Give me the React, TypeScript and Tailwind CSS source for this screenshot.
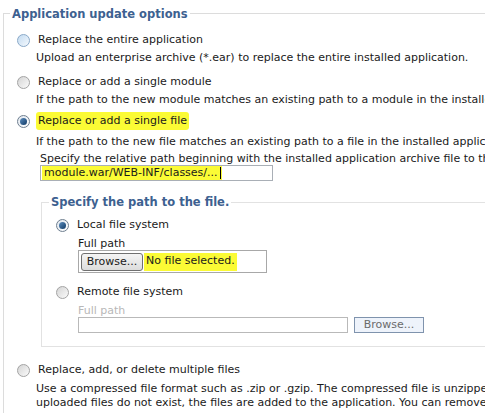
import React from 'react'

function Radio({ checked = false, hover = false }: { checked?: boolean; hover?: boolean }) {
  if (checked) {
    return (
      <span className="flex h-[13px] w-[13px] shrink-0 items-center justify-center rounded-full border border-[#6f7f90] bg-linear-to-br from-[#dfe6ee] to-[#ffffff]">
        <span className="h-[7px] w-[7px] rounded-full bg-linear-to-br from-[#5d8fc0] to-[#0f3a66]" />
      </span>
    )
  }
  return (
    <span
      className={
        hover
          ? 'h-[13px] w-[13px] shrink-0 rounded-full border border-[#8aa9c8] bg-linear-to-br from-[#c3dbf1] to-[#f5f9fd]'
          : 'h-[13px] w-[13px] shrink-0 rounded-full border border-[#a3a3a3] bg-linear-to-br from-[#d4d4d4] to-[#fbfbfb]'
      }
    />
  )
}

const hl = 'bg-[#fbfb35]'

export default function App() {
  return (
    <div className="h-[413px] w-[485px] overflow-hidden bg-white text-[11px] text-[#1a1a1a] font-['DejaVu_Sans',Verdana,sans-serif]">
      {/* outer group: left/top border only, the rest runs past the window */}
      <div className="ml-[3px] mt-[13px] w-[640px] border-l border-t border-[#dcdcdc] pb-4">
        <div className="-mt-[8px] ml-[6px] w-fit bg-white px-[2px] text-[11.5px] font-bold leading-[16px] text-[#3d6190]">
          Application update options
        </div>

        {/* entire application */}
        <div className="mt-[10px] flex h-[16px] items-center pl-[13px] leading-[16px]">
          <Radio hover />
          <span className="ml-[8px] whitespace-nowrap">Replace the entire application</span>
        </div>
        <p className="mt-[3px] whitespace-nowrap pl-[32px] leading-[14px]">
          Upload an enterprise archive (*.ear) to replace the entire installed application.
        </p>

        {/* single module */}
        <div className="mt-[9px] flex h-[16px] items-center pl-[13px] leading-[16px]">
          <Radio />
          <span className="ml-[8px] whitespace-nowrap">Replace or add a single module</span>
        </div>
        <p className="mt-[3px] whitespace-nowrap pl-[32px] leading-[14px]">
          If the path to the new module matches an existing path to a module in the installed application, the module is replaced.
        </p>

        {/* single file */}
        <div className="mt-[6px] flex h-[16px] items-center pl-[13px] leading-[16px]">
          <Radio checked />
          <span className={`ml-[6px] whitespace-nowrap rounded-[3px] px-[2px] py-[1px] ${hl}`}>
            Replace or add a single file
          </span>
        </div>
        <p className="mt-[6px] whitespace-nowrap pl-[32px] leading-[14px]">
          If the path to the new file matches an existing path to a file in the installed application, the file is replaced.
        </p>
        <p className="mt-[3px] h-[13px] whitespace-nowrap pl-[36px] leading-[13px]">
          Specify the relative path beginning with the installed application archive file to the file to be replaced.
        </p>
        <div className="ml-[36px] flex h-[16px] w-[233px] items-center border border-[#a9afb6] pl-[1px]">
          <span className={`flex h-[14px] items-center whitespace-nowrap pl-[2px] pr-[1px] leading-[14px] ${hl}`}>
            module.war/WEB-INF/classes/...
            <span className="ml-[2px] h-[12px] w-px bg-black" />
          </span>
        </div>

        {/* path to the file */}
        <div className="ml-[37px] mt-[21px] border-b border-l border-t border-[#e2e2e2] pb-[13px]">
          <div className="-mt-[9px] ml-[7px] w-fit bg-white px-[2px] text-[11.5px] font-bold leading-[16px] text-[#3d6190]">
            Specify the path to the file.
          </div>
          <div className="mt-[7px] flex h-[16px] items-center pl-[14px] leading-[16px]">
            <Radio checked />
            <span className="ml-[8px] whitespace-nowrap">Local file system</span>
          </div>
          <p className="mt-[4px] h-[13px] pl-[36px] leading-[13px]">Full path</p>
          <div className="ml-[36px] flex h-[23px] w-[189px] items-center border border-[#a8a8a8] pl-[2px]">
            <button className="h-[18px] w-[62px] rounded-[3px] border border-[#707070] bg-linear-to-b from-[#f4f4f4] to-[#dcdcdc] text-[11px] leading-[16px] text-[#1a1a1a]">
              Browse...
            </button>
            <span className={`ml-[1px] flex h-[18px] items-center whitespace-nowrap px-[2px] ${hl}`}>
              No file selected.
            </span>
          </div>

          <div className="mt-[11px] flex h-[16px] items-center pl-[14px] leading-[16px]">
            <Radio />
            <span className="ml-[8px] whitespace-nowrap">Remote file system</span>
          </div>
          <p className="mt-[4px] h-[13px] pl-[36px] leading-[13px] text-[#b8b8b8]">Full path</p>
          <div className="ml-[36px] flex h-[16px] items-center">
            <div className="h-[16px] w-[270px] border border-[#b9b9b9]" />
            <button className="ml-[6px] h-[16px] w-[70px] border border-[#7f93ad] bg-[#eef3fb] text-[11px] leading-[14px] text-[#6b6b6b]">
              Browse...
            </button>
          </div>
        </div>

        {/* multiple files */}
        <div className="mt-[15px] flex h-[16px] items-center pl-[13px] leading-[16px]">
          <Radio />
          <span className="ml-[8px] whitespace-nowrap">Replace, add, or delete multiple files</span>
        </div>
        <p className="mt-[4px] whitespace-nowrap pl-[32px] leading-[14px]">
          Use a compressed file format such as .zip or .gzip. The compressed file is unzipped into the installed application. If the
          <br />
          uploaded files do not exist, the files are added to the application. You can remove files from the application.
        </p>
      </div>
    </div>
  )
}
